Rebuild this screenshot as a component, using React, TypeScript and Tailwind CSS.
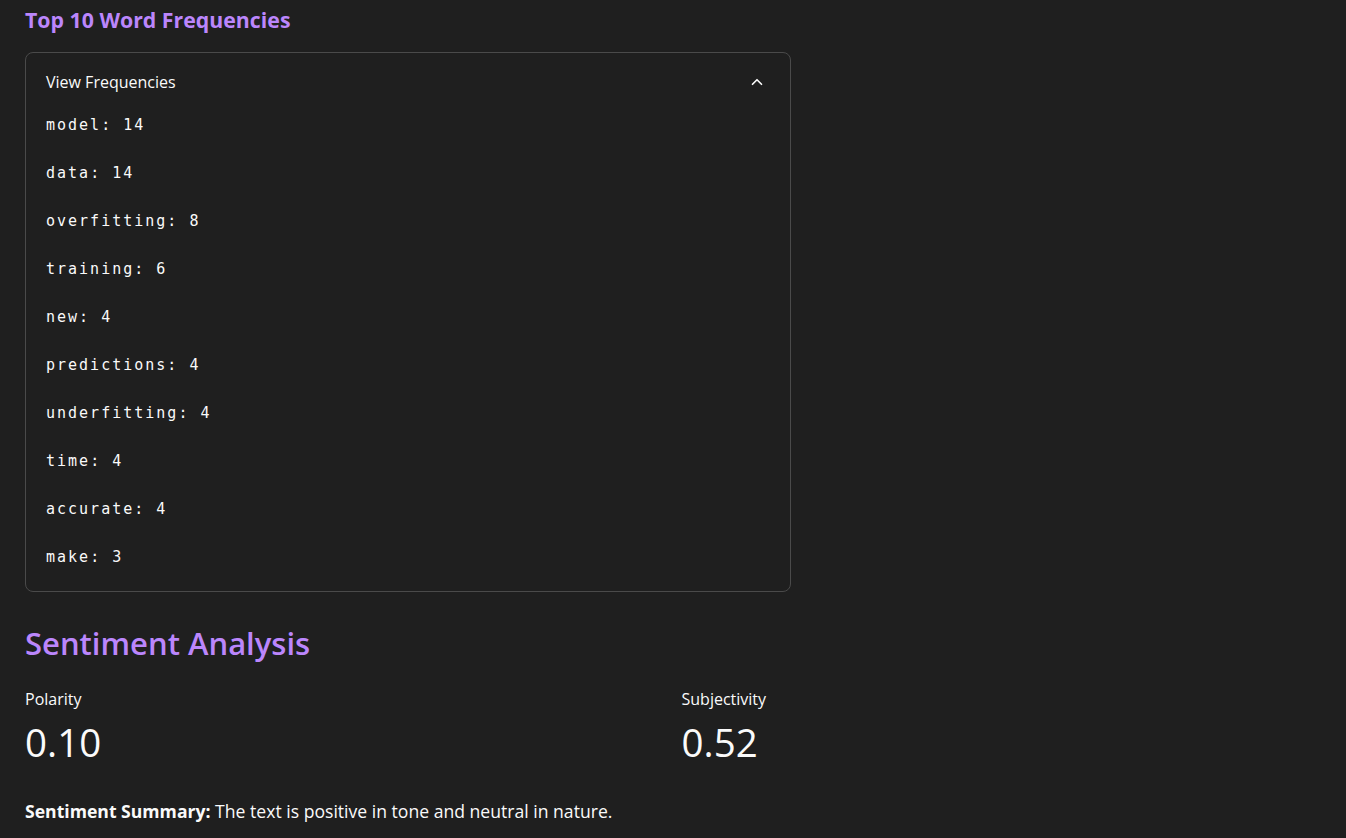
import React from "react";
import { ChevronUp } from "lucide-react";

const freqs: [string, number][] = [
  ["model", 14],
  ["data", 14],
  ["overfitting", 8],
  ["training", 6],
  ["new", 4],
  ["predictions", 4],
  ["underfitting", 4],
  ["time", 4],
  ["accurate", 4],
  ["make", 3],
];

const sans = "font-['Open_Sans','Noto_Sans',sans-serif]";

function Metric({ label, value }: { label: string; value: string }) {
  return (
    <div className="flex flex-col">
      <span className="text-[16px] leading-5 text-[#fafafa]">{label}</span>
      <span className="mt-[12px] text-[38.5px] leading-[42px] text-[#fafafa]">
        {value}
      </span>
    </div>
  );
}

export default function App() {
  return (
    <div className={`min-h-[838px] w-full bg-[#1f1f1f] px-6 text-[#fafafa] ${sans}`}>
      <div className="w-[767px] pl-[1px]">
        <h3 className="pt-[6px] text-[21.3px] font-bold leading-7 text-[#bb86fc]">
          Top 10 Word Frequencies
        </h3>
        <div className="mt-[18px] rounded-lg border border-[#4a4a4a]">
          <div className="flex items-center justify-between pl-5 pr-6 pt-[17px] pb-[10px]">
            <span className="text-[16px] leading-6">View Frequencies</span>
            <ChevronUp className="h-[18px] w-[18px]" strokeWidth={2.25} />
          </div>
          <div className="flex flex-col gap-6 pl-5 pt-[9px] pb-[22px] font-['DejaVu_Sans_Mono','Liberation_Mono',monospace] text-[15px] tracking-[2px]">
            {freqs.map(([w, n]) => (
              <div key={w} className="h-6 leading-6">
                {w}: {n}
              </div>
            ))}
          </div>
        </div>
        <h2 className="mt-[31px] text-[31px] font-semibold leading-[40px] text-[#bb86fc]">
          Sentiment Analysis
        </h2>
      </div>
      <div className="mt-[26px] grid grid-cols-2 gap-4 pl-[1px]">
        <Metric label="Polarity" value="0.10" />
        <Metric label="Subjectivity" value="0.52" />
      </div>
      <p className="mt-[36px] pl-[1px] text-[17.6px] leading-6">
        <span className="font-bold">Sentiment Summary:</span> The text is
        positive in tone and neutral in nature.
      </p>
    </div>
  );
}
